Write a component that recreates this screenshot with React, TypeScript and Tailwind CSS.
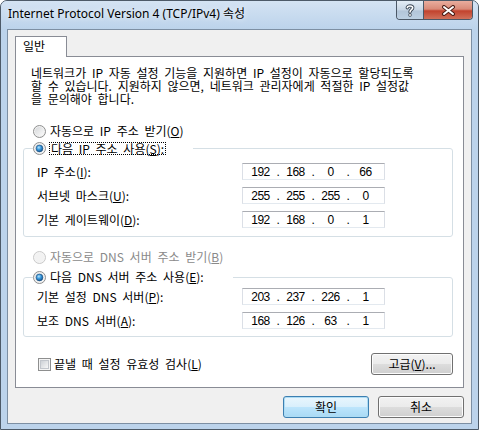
import type { ReactNode } from 'react';

const kr = "font-['Noto_Sans_CJK_KR','Noto_Sans_CJK_SC',sans-serif]";

function Radio({ checked, disabled }: { checked?: boolean; disabled?: boolean }) {
    return (
        <svg width="13" height="13" viewBox="0 0 13 13" className="shrink-0">
            <defs>
                <linearGradient id="radio-fill" x1="0" y1="0" x2="1" y2="1">
                    <stop offset="0" stopColor="#d6d8da" />
                    <stop offset="1" stopColor="#fbfbfb" />
                </linearGradient>
                <radialGradient id="radio-dot" cx="0.4" cy="0.35" r="0.7">
                    <stop offset="0" stopColor="#b6e3fb" />
                    <stop offset="0.45" stopColor="#3a9ade" />
                    <stop offset="1" stopColor="#0d4a84" />
                </radialGradient>
            </defs>
            <circle
                cx="6.5"
                cy="6.5"
                r="6"
                fill={disabled ? '#f4f4f4' : '#f1f1f1'}
                stroke={disabled ? '#c9c9c9' : '#8e8f8f'}
            />
            <circle
                cx="6.5"
                cy="6.5"
                r="4.5"
                fill={disabled ? '#f2f2f2' : 'url(#radio-fill)'}
            />
            {checked ? (
                <circle cx="6.5" cy="6.5" r="3.4" fill="url(#radio-dot)" stroke="#1b4f7f" strokeWidth="0.6" />
            ) : null}
        </svg>
    );
}

function Checkbox() {
    return (
        <span className="flex size-[13px] shrink-0 items-center justify-center border border-[#8e8f8f] bg-[#f4f4f4]">
            <span className="size-[9px] border border-[#c2c6cc] bg-[linear-gradient(135deg,#cdd1d6,#f7f7f7)]" />
        </span>
    );
}

function WinButton({
    children,
    primary,
    className = '',
}: {
    children: ReactNode;
    primary?: boolean;
    className?: string;
}) {
    return (
        <button
            type="button"
            className={`${kr} flex h-[22px] items-center justify-center rounded-[3px] border text-[12px] leading-[14px] text-black ${
                primary
                    ? 'border-[#3c7fb1] bg-[linear-gradient(to_bottom,#e9f6fd_0%,#d8effc_50%,#bde5fc_50%,#a9daf5_100%)] shadow-[inset_0_0_0_1px_#aedcf4]'
                    : 'border-[#707070] bg-[linear-gradient(to_bottom,#f2f2f2_0%,#ebebeb_50%,#dddddd_50%,#cfcfcf_100%)] shadow-[inset_0_0_0_1px_#fcfcfc]'
            } ${className}`}
        >
            {children}
        </button>
    );
}

function IpBox({ parts }: { parts: string[] }) {
    return (
        <div className="flex h-[17px] w-[143px] items-center border border-[#abadb3] border-x-[#dbdfe6] border-b-[#e3e9ef] bg-white pl-[4px] font-['Liberation_Sans',sans-serif] text-[12px] leading-[14px] tracking-[-0.5px] text-black [word-spacing:0]">
            {parts.map((p, i) => (
                <span key={i} className="flex">
                    {i > 0 ? <span className="w-[8px] text-center">.</span> : null}
                    <span className="w-[27px] text-center">{p}</span>
                </span>
            ))}
        </div>
    );
}

function Row({ label, parts }: { label: ReactNode; parts: string[] }) {
    return (
        <div className="flex h-[17px] items-center">
            <span className="w-[205px] text-[12px] leading-[14px]">{label}</span>
            <IpBox parts={parts} />
        </div>
    );
}

export default function App() {
    return (
        <div className={`${kr} flex h-[430px] w-[479px] flex-col overflow-hidden rounded-t-[7px] border border-[#4d5a68] bg-[#bcd3eb] text-black`}>
            <div className="flex h-[28px] shrink-0 items-start justify-between bg-[linear-gradient(to_bottom,#d4e3f3,#bcd3eb)] pl-[7px] pr-[5px]">
                <span className="mt-[5px] font-['Noto_Sans','Noto_Sans_CJK_KR',sans-serif] text-[12px] leading-[16px] [text-shadow:0_0_6px_#ffffff]">
                    Internet Protocol Version 4 (TCP/IPv4) 속성
                </span>
                <div className="flex h-[19px] overflow-hidden rounded-b-[4px] border border-t-0 border-[#4b5867]">
                    <div className="flex w-[27px] items-center justify-center border-r border-[#4b5867] bg-[linear-gradient(to_bottom,#e3ecf5_0%,#c7d6e5_50%,#b2c5d9_55%,#bcd0e3_100%)]">
                        <svg width="10" height="13" viewBox="0 0 10 13">
                            <path d="M2.3 3.8C2.3 1.4 7.7 1.4 7.7 3.8C7.7 5.8 5 5.6 5 8" fill="none" stroke="#3a4654" strokeWidth="3.4" strokeLinecap="round" />
                            <circle cx="5" cy="11" r="1.7" fill="#3a4654" />
                            <path d="M2.3 3.8C2.3 1.4 7.7 1.4 7.7 3.8C7.7 5.8 5 5.6 5 8" fill="none" stroke="#ffffff" strokeWidth="1.6" strokeLinecap="round" />
                            <circle cx="5" cy="11" r="0.9" fill="#ffffff" />
                        </svg>
                    </div>
                    <div className="flex w-[48px] items-center justify-center bg-[linear-gradient(to_bottom,#e9ad9e_0%,#d98a78_45%,#c2432e_55%,#d0705a_100%)]">
                        <svg width="15" height="11" viewBox="0 0 15 11">
                            <path d="M3 2L12 9M12 2L3 9" stroke="#4a1d16" strokeWidth="4" strokeLinecap="round" />
                            <path d="M3 2L12 9M12 2L3 9" stroke="#ffffff" strokeWidth="2" strokeLinecap="round" />
                        </svg>
                    </div>
                </div>
            </div>

            <div className="mx-[6px] flex h-[395px] shrink-0 flex-col border border-[#7d8fa3] bg-[#f0f0f0] px-[7px] pt-[6px]">
                <div className="relative z-10 -mb-px h-[21px] w-[52px] border border-b-0 border-[#898c95] bg-white pl-[7px] pt-px text-[12px] leading-[16px]">
                    일반
                </div>
                <div className="flex h-[332px] flex-col border border-[#898c95] bg-white text-[12px] [word-spacing:3px]">
                    <p className="ml-[15px] mt-[9px] leading-[13px]">
                        네트워크가 IP 자동 설정 기능을 지원하면 IP 설정이 자동으로 할당되도록
                        <br />
                        할 수 있습니다. 지원하지 않으면, 네트워크 관리자에게 적절한 IP 설정값
                        <br />
                        을 문의해야 합니다.
                    </p>

                    <label className="ml-[17px] mt-[18px] flex h-[16px] items-center gap-[4px] leading-[14px]">
                        <Radio />
                        <span>
                            자동으로 IP 주소 받기(<u>O</u>)
                        </span>
                    </label>

                    <fieldset className="ml-[7px] mt-px w-[430px] rounded-[3px] border border-[#d5dfe5] pb-[8px] pt-[7px]">
                        <legend className="ml-[9px] flex h-[16px] w-[160px] items-center gap-[3px]">
                            <Radio checked />
                            <span className="border border-dotted border-black px-px leading-[11px]">
                                다음 IP 주소 사용(<u>S</u>):
                            </span>
                        </legend>
                        <div className="flex flex-col gap-[7px] pl-[13px]">
                            <Row label={<>IP 주소(<u>I</u>):</>} parts={['192', '168', '0', '66']} />
                            <Row label={<>서브넷 마스크(<u>U</u>):</>} parts={['255', '255', '255', '0']} />
                            <Row label={<>기본 게이트웨이(<u>D</u>):</>} parts={['192', '168', '0', '1']} />
                        </div>
                    </fieldset>

                    <label className="ml-[17px] mt-[12px] flex h-[16px] items-center gap-[4px] leading-[14px] text-[#8a8a8a]">
                        <Radio disabled />
                        <span>
                            자동으로 DNS 서버 주소 받기(<u>B</u>)
                        </span>
                    </label>

                    <fieldset className="ml-[7px] mt-[4px] w-[430px] rounded-[3px] border border-[#d5dfe5] pb-[7px] pt-[3px]">
                        <legend className="ml-[9px] flex h-[16px] w-[200px] items-center gap-[4px] leading-[14px]">
                            <Radio checked />
                            <span>
                                다음 DNS 서버 주소 사용(<u>E</u>):
                            </span>
                        </legend>
                        <div className="flex flex-col gap-[7px] pl-[13px]">
                            <Row label={<>기본 설정 DNS 서버(<u>P</u>):</>} parts={['203', '237', '226', '1']} />
                            <Row label={<>보조 DNS 서버(<u>A</u>):</>} parts={['168', '126', '63', '1']} />
                        </div>
                    </fieldset>

                    <div className="ml-[22px] mr-[10px] mt-[16px] flex items-center justify-between">
                        <label className="flex items-center gap-[3px] leading-[14px]">
                            <Checkbox />
                            <span>
                                끝낼 때 설정 유효성 검사(<u>L</u>)
                            </span>
                        </label>
                        <WinButton className="w-[82px]">
                            고급(<u>V</u>)...
                        </WinButton>
                    </div>
                </div>

                <div className="mt-[8px] flex justify-end gap-[9px]">
                    <WinButton primary className="w-[86px]">
                        확인
                    </WinButton>
                    <WinButton className="w-[86px]">취소</WinButton>
                </div>
            </div>
        </div>
    );
}
